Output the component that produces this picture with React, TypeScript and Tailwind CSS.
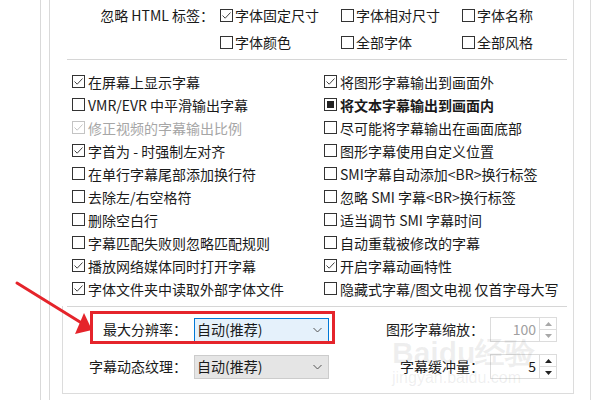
import React from "react";

type CbState = "on" | "off" | "fill";

function Box({ state, disabled }: { state: CbState; disabled?: boolean }) {
  const border = disabled ? "border-[#c4c4c4]" : "border-[#333333]";
  return (
    <span className={`relative flex h-[13px] w-[13px] shrink-0 items-center justify-center border bg-white ${border}`}>
      {state === "on" && (
        <svg width="11" height="11" viewBox="0 0 11 11">
          <polyline
            points="1.5,5.5 4.2,8.2 9.5,2.5"
            fill="none"
            stroke={disabled ? "#c4c4c4" : "#444444"}
            strokeWidth="1"
          />
        </svg>
      )}
      {state === "fill" && <span className="h-[7px] w-[7px] bg-[#222222]" />}
    </span>
  );
}

function Check({
  label,
  state = "off",
  disabled,
  bold,
  gap = "gap-[3px]",
}: {
  label: string;
  state?: CbState;
  disabled?: boolean;
  bold?: boolean;
  gap?: string;
}) {
  return (
    <div className={`flex items-center ${gap} whitespace-nowrap`}>
      <Box state={state} disabled={disabled} />
      <span
        className={`text-[14px] leading-[18px] ${disabled ? "text-[#a6a6a6]" : "text-[#1a1a1a]"} ${
          bold ? "font-bold" : ""
        }`}
      >
        {label}
      </span>
    </div>
  );
}

function Chevron() {
  return (
    <svg width="9" height="6" viewBox="0 0 9 6">
      <polyline points="0.5,1 4.5,5 8.5,1" fill="none" stroke="#555555" strokeWidth="1" />
    </svg>
  );
}

function Tri({ up, color }: { up?: boolean; color: string }) {
  return (
    <svg width="7" height="4" viewBox="0 0 7 4">
      {up ? <polygon points="3.5,0 7,4 0,4" fill={color} /> : <polygon points="0,0 7,0 3.5,4" fill={color} />}
    </svg>
  );
}

function Spin({ value, disabled }: { value: string; disabled?: boolean }) {
  const arrow = disabled ? "#a8a8a8" : "#222222";
  return (
    <div className="flex h-[25px] w-[67px] border border-[#dcdcdc] bg-white">
      <div
        className={`flex flex-1 items-center justify-end pr-[3px] text-[14px] ${
          disabled ? "text-[#a0a0a0]" : "text-[#1a1a1a]"
        }`}
      >
        {value}
      </div>
      <div className="flex w-[17px] flex-col border-l border-[#dcdcdc]">
        <div className="flex flex-1 items-center justify-center border-b border-[#dcdcdc]">
          <Tri up color={arrow} />
        </div>
        <div className="flex flex-1 items-center justify-center">
          <Tri color={arrow} />
        </div>
      </div>
    </div>
  );
}

const leftCol: { label: string; state?: CbState; disabled?: boolean }[] = [
  { label: "在屏幕上显示字幕", state: "on" },
  { label: "VMR/EVR 中平滑输出字幕" },
  { label: "修正视频的字幕输出比例", state: "on", disabled: true },
  { label: "字首为 - 时强制左对齐", state: "on" },
  { label: "在单行字幕尾部添加换行符" },
  { label: "去除左/右空格符" },
  { label: "删除空白行" },
  { label: "字幕匹配失败则忽略匹配规则" },
  { label: "播放网络媒体同时打开字幕", state: "on" },
  { label: "字体文件夹中读取外部字体文件", state: "on" },
];

const rightCol: { label: string; state?: CbState; bold?: boolean }[] = [
  { label: "将图形字幕输出到画面外", state: "on" },
  { label: "将文本字幕输出到画面内", state: "fill", bold: true },
  { label: "尽可能将字幕输出在画面底部" },
  { label: "图形字幕使用自定义位置" },
  { label: "SMI字幕自动添加<BR>换行标签" },
  { label: "忽略 SMI 字幕<BR>换行标签" },
  { label: "适当调节 SMI 字幕时间" },
  { label: "自动重载被修改的字幕" },
  { label: "开启字幕动画特性", state: "on" },
  { label: "隐藏式字幕/图文电视 仅首字母大写" },
];

export default function App() {
  return (
    <div
      className="relative flex h-[400px] w-[600px] overflow-hidden bg-white text-[#1a1a1a]"
      style={{ fontFamily: '"Noto Sans CJK SC", "Noto Sans", sans-serif' }}
    >
      <div className="w-[40px] shrink-0" />
      <div className="w-[10px] shrink-0 border-l border-r border-[#d9d9d9]" />

      {/* main content column */}
      <div className="flex h-[394px] w-[524px] shrink-0 flex-col border-r border-[#dcdcdc]">
        {/* top: ignore HTML tags */}
        <div className="grid grid-cols-[170px_121px_121px_1fr] gap-y-[3px] pt-[3px]">
          <div className="flex h-[24px] items-center justify-end pr-[6px] text-[14px] whitespace-nowrap">
            忽略 HTML 标签：
          </div>
          <div className="flex h-[24px] items-center">
            <Check label="字体固定尺寸" state="on" gap="gap-[2px]" />
          </div>
          <div className="flex h-[24px] items-center">
            <Check label="字体相对尺寸" gap="gap-[2px]" />
          </div>
          <div className="flex h-[24px] items-center">
            <Check label="字体名称" gap="gap-[2px]" />
          </div>
          <div className="h-[24px]" />
          <div className="flex h-[24px] items-center">
            <Check label="字体颜色" gap="gap-[2px]" />
          </div>
          <div className="flex h-[24px] items-center">
            <Check label="全部字体" gap="gap-[2px]" />
          </div>
          <div className="flex h-[24px] items-center">
            <Check label="全部风格" gap="gap-[2px]" />
          </div>
        </div>

        <div className="ml-[17px] mr-[6px] mt-[5px] h-px bg-[#d6d6d6]" />

        {/* checkbox grid */}
        <div className="mt-[10px] grid grid-cols-[252px_1fr] pl-[22px]">
          {leftCol.map((l, i) => (
            <React.Fragment key={i}>
              <div className="flex h-[23px] items-center">
                <Check label={l.label} state={l.state} disabled={l.disabled} />
              </div>
              <div className="flex h-[23px] items-center">
                <Check label={rightCol[i].label} state={rightCol[i].state} bold={rightCol[i].bold} />
              </div>
            </React.Fragment>
          ))}
        </div>

        {/* bottom box */}
        <div className="ml-[12px] mt-[6px] flex flex-1 flex-col border-b border-l border-[#dcdcdc]">
          <div className="ml-[4px] mr-[6px] h-px bg-[#d6d6d6]" />
          <div className="mt-[10px] flex h-[25px] items-center">
            <div className="w-[124px] pr-[0px] text-right text-[14px] whitespace-nowrap">最大分辨率：</div>
            <div className="ml-[7px] flex h-[24px] w-[135px] items-center justify-between border border-[#0078d7] bg-[#e5f1fb] pl-[2px] pr-[6px] text-[14px]">
              <span>自动(推荐)</span>
              <Chevron />
            </div>
            <div className="w-[155px] text-right text-[14px] whitespace-nowrap">图形字幕缩放：</div>
            <div className="ml-[6px]">
              <Spin value="100" disabled />
            </div>
          </div>
          <div className="mt-[12px] flex h-[25px] items-center">
            <div className="w-[124px] text-right text-[14px] whitespace-nowrap">字幕动态纹理：</div>
            <div className="ml-[7px] flex h-[24px] w-[135px] items-center justify-between border border-[#cccccc] bg-[#e5e5e5] pl-[2px] pr-[6px] text-[14px]">
              <span>自动(推荐)</span>
              <Chevron />
            </div>
            <div className="w-[155px] text-right text-[14px] whitespace-nowrap">字幕缓冲量：</div>
            <div className="ml-[6px]">
              <Spin value="5" />
            </div>
          </div>
        </div>
      </div>

      <div className="w-[16px] shrink-0" />
      <div className="flex-1 border-l border-[#dcdcdc]" />

      {/* red annotation rectangle */}
      <div className="pointer-events-none absolute left-[90px] top-[311px] h-[33px] w-[245px] border-[3px] border-[#e5242b]" />

      {/* red arrow */}
      <svg className="pointer-events-none absolute left-0 top-0" width="600" height="400" viewBox="0 0 600 400">
        <line x1="17" y1="283" x2="80" y2="322" stroke="#e5242b" strokeWidth="3" strokeLinecap="round" />
        <polygon points="92,330 75,334 84,313" fill="#e5242b" />
      </svg>

      {/* watermark */}
      <div className="pointer-events-none absolute left-[392px] top-[338px] flex flex-col items-start leading-none text-[rgba(120,120,120,0.12)]">
        <span className="text-[30px] font-bold" style={{ fontFamily: '"Liberation Sans", sans-serif' }}>
          Baidu经验
        </span>
        <span className="mt-[2px] text-[16px]" style={{ fontFamily: '"Liberation Sans", sans-serif' }}>
          jingyan.baidu.com
        </span>
      </div>
    </div>
  );
}
